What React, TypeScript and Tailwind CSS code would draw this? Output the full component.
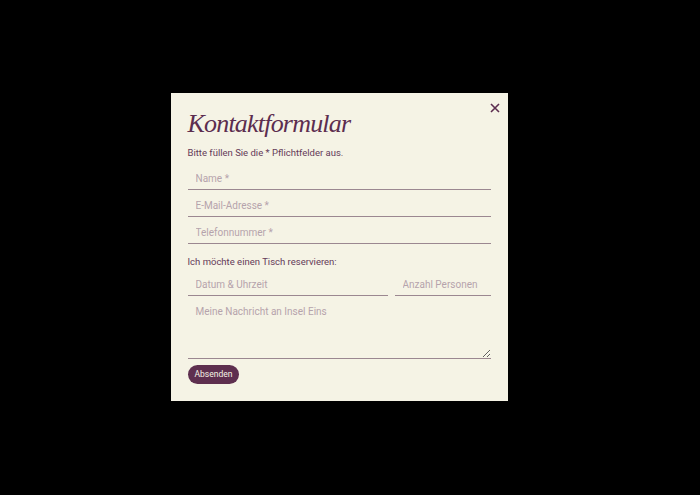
import React from "react";

const Field = ({ placeholder, className = "w-full" }: { placeholder: string; className?: string }) => (
  <input
    type="text"
    placeholder={placeholder}
    className={`block min-w-0 h-[27px] bg-transparent border-b border-[#9b8790] px-2 pt-[5px] text-[10px] text-[#5c2d4f] placeholder:text-[#b5a3ac] outline-none ${className}`}
  />
);

const App = () => {
  return (
    <div className="bg-black min-h-screen w-full flex items-center justify-center font-['Roboto',sans-serif]">
      {/* Modal */}
      <div className="relative mr-[22px] mb-[2px] w-[337px] bg-[#f5f3e5] px-[17px] pt-[14px] pb-[17px] text-[#5c2d4f]">
        <button className="absolute right-[6px] top-[8px] w-[14px] h-[14px] flex items-center justify-center text-[#5c2d4f]">
          <svg width="10" height="10" viewBox="0 0 10 10" fill="none" stroke="currentColor" strokeWidth="1.6">
            <path d="M1 1L9 9M9 1L1 9" />
          </svg>
        </button>

        <h2 className="font-['Liberation_Serif',serif] italic text-[26px] tracking-[-0.8px] leading-[34px] text-[#5c2d4f]">
          Kontaktformular
        </h2>
        <p className="text-[9.5px] mt-[5px] leading-[14px] text-[#643a58]">Bitte füllen Sie die * Pflichtfelder aus.</p>

        <div className="mt-[3px] flex flex-col">
          <Field placeholder="Name *" />
          <Field placeholder="E-Mail-Adresse *" />
          <Field placeholder="Telefonnummer *" />
        </div>

        <p className="text-[9.5px] mt-[11px] leading-[14px] text-[#643a58]">Ich möchte einen Tisch reservieren:</p>

        <div className="flex gap-[7px]">
          <Field placeholder="Datum & Uhrzeit" className="flex-1" />
          <Field placeholder="Anzahl Personen" className="w-[96px] flex-none" />
        </div>

        <textarea
          placeholder="Meine Nachricht an Insel Eins"
          className="block w-full h-[63px] bg-transparent border-b border-[#9b8790] px-2 pt-[8px] text-[10px] text-[#5c2d4f] placeholder:text-[#b5a3ac] outline-none"
        />

        <button className="block mt-[6px] h-[19px] px-[7px] rounded-full bg-[#5e2f4f] text-[#f5f3e5] text-[8.5px] leading-[19px]">
          Absenden
        </button>
      </div>
    </div>
  );
};

export default App;
